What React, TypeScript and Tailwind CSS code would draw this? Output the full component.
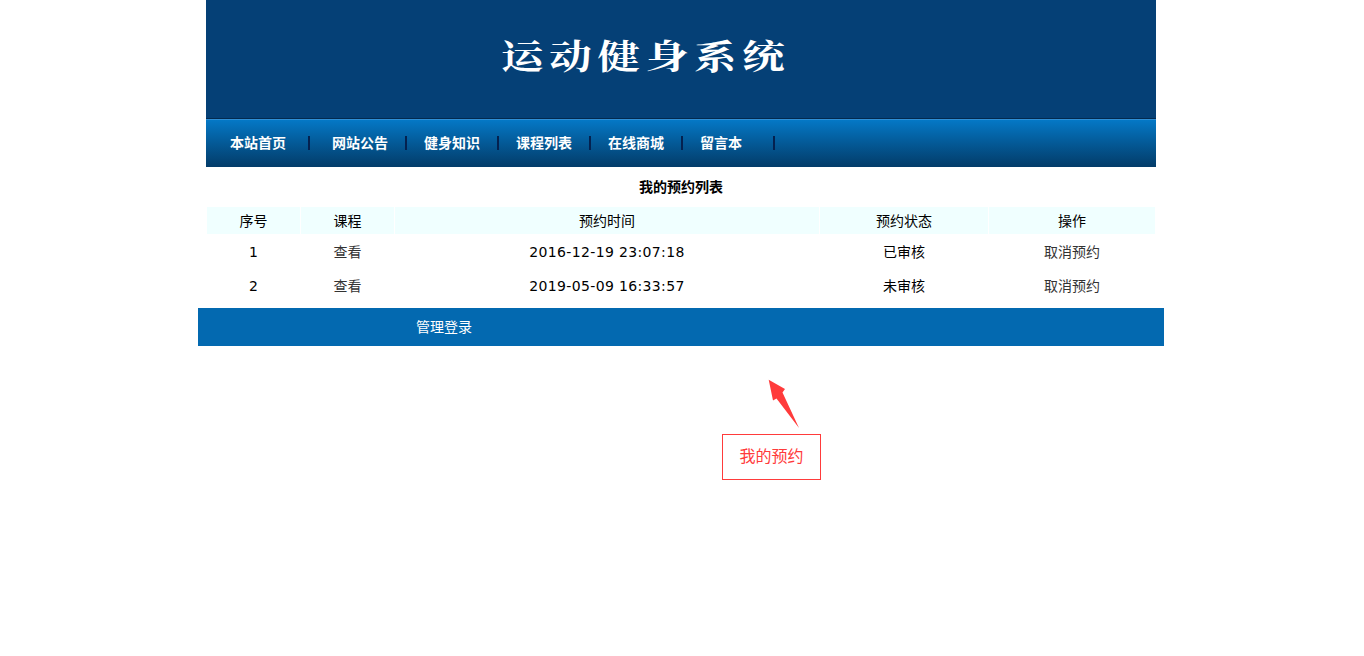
import React from 'react';

const cjk = "font-['Liberation_Sans','Noto_Sans_CJK_SC',sans-serif]";

const navItems = [
  { label: '本站首页', className: 'w-[56px] mr-[22px]' },
  { label: '网站公告', className: 'w-[57px] ml-[22px] mr-[16px]' },
  { label: '健身知识', className: 'w-[56px] ml-[17px] mr-[17px]' },
  { label: '课程列表', className: 'w-[56px] ml-[17px] mr-[17px]' },
  { label: '在线商城', className: 'w-[56px] ml-[17px] mr-[17px]' },
  { label: '留言本', className: 'w-[56px] ml-[17px] mr-[17px]' },
];

const rows = [
  { id: '1', time: '2016-12-19 23:07:18', status: '已审核' },
  { id: '2', time: '2019-05-09 16:33:57', status: '未审核' },
];

function Header() {
  return (
    <div className="w-[950px] mx-auto">
      {/* banner */}
      <div className="h-[119px] bg-[#054076] border-b border-[#032a4f] flex items-start justify-center">
        <h1 className="mt-[35px] mr-[70px] scale-x-[1.25] text-[34px] leading-[40px] font-bold text-white tracking-[4.6px] whitespace-nowrap font-['Noto_Serif_CJK_SC','Noto_Sans_CJK_SC',serif]">
          运动健身系统
        </h1>
      </div>
      {/* nav */}
      <div className="h-[48px] border-t border-[#2f8fd6] bg-gradient-to-b from-[#0478c6] to-[#033c69] flex items-center pl-[24px] pb-[1px]">
        {navItems.map((item) => (
          <React.Fragment key={item.label}>
            <a className={`${item.className} text-[14px] font-bold text-white whitespace-nowrap`}>{item.label}</a>
            <span className="w-[2px] h-[14px] bg-[#04214f]"></span>
          </React.Fragment>
        ))}
      </div>
    </div>
  );
}

function ReservationTable() {
  return (
    <div className="w-[950px] mx-auto">
      <div className="h-[40px] pt-[12px] text-center text-[14px] leading-[16px] font-bold text-black">
        我的预约列表
      </div>
      <div className="grid grid-cols-[93px_93px_424px_168px_166px] gap-x-[1px] px-[1px] text-[14px] text-center">
        <div className="h-[27px] leading-[28px] bg-[#f0ffff] text-black">序号</div>
        <div className="h-[27px] leading-[28px] bg-[#f0ffff] text-black">课程</div>
        <div className="h-[27px] leading-[28px] bg-[#f0ffff] text-black">预约时间</div>
        <div className="h-[27px] leading-[28px] bg-[#f0ffff] text-black">预约状态</div>
        <div className="h-[27px] leading-[28px] bg-[#f0ffff] text-black">操作</div>
        {rows.map((row) => (
          <React.Fragment key={row.id}>
            <div className="h-[34px] leading-[36px] text-black font-['DejaVu_Sans',sans-serif]">{row.id}</div>
            <div className="h-[34px] leading-[36px] text-[#333333]">查看</div>
            <div className="h-[34px] leading-[36px] text-black tracking-[0.35px] font-['DejaVu_Sans',sans-serif]">{row.time}</div>
            <div className="h-[34px] leading-[36px] text-black">{row.status}</div>
            <div className="h-[34px] leading-[36px] text-[#333333]">取消预约</div>
          </React.Fragment>
        ))}
      </div>
    </div>
  );
}

export default function App() {
  return (
    <div className={`relative min-h-[656px] bg-white ${cjk}`}>
      <div className="w-[1362px]">
        <Header />
        <ReservationTable />
        <div className="w-[966px] h-[38px] mt-[6px] mx-auto bg-[#0369b0] pl-[218px] leading-[38px] text-[14px] text-white">
          管理登录
        </div>
      </div>

      {/* annotation laid over the page */}
      <svg className="absolute left-[765px] top-[376px]" width="38" height="56" viewBox="0 0 38 56">
        <path d="M3.7 3.7 L20 13 L17.5 16.5 L34 52 L11.5 22.5 L8 24.5 Z" fill="#ff3b3b" />
      </svg>
      <div className="absolute left-[722px] top-[434px] w-[99px] h-[46px] border border-[#ff3b3b] text-center leading-[44px] text-[16px] text-[#ff3b3b]">
        我的预约
      </div>
    </div>
  );
}
